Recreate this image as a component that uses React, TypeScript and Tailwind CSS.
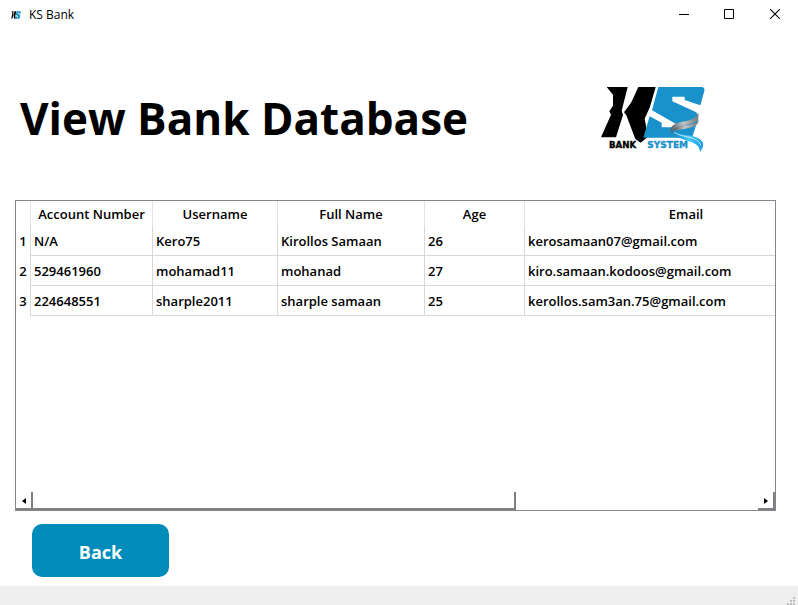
import React from "react";

type Account = {
  accountNumber: string;
  username: string;
  fullName: string;
  age: number;
  email: string;
};

const accounts: Account[] = [
  { accountNumber: "N/A", username: "Kero75", fullName: "Kirollos Samaan", age: 26, email: "kerosamaan07@gmail.com" },
  { accountNumber: "529461960", username: "mohamad11", fullName: "mohanad", age: 27, email: "kiro.samaan.kodoos@gmail.com" },
  { accountNumber: "224648551", username: "sharple2011", fullName: "sharple samaan", age: 25, email: "kerollos.sam3an.75@gmail.com" },
];

const headings = ["Account Number", "Username", "Full Name", "Age", "Email"];

function LetterMarks() {
  return (
    <>
      <path d="M50 36H113L95 107L99 120L78 187H33L63 119L58 109L69 92V59Z" fill="#000" />
      <path d="M145 36H197L180 95L164 131L174 185L152 203L136 192L109 121L102 112L124 82Z" fill="#000" />
      <path d="M205 36H334Q345 36 343 48L331 91L284 75V65H247V79L319 112L325 130L308 182Q304 188 294 188H160L179 124L215 143V157H250L257 146L186 106Z" fill="#1991ca" />
    </>
  );
}

function Logo() {
  return (
    <svg width="130" height="85" viewBox="0 0 390 255" role="img" aria-label="KS Bank System">
      <defs>
        <linearGradient id="silver" x1="0" x2="1">
          <stop offset="0" stopColor="#555b60" />
          <stop offset=".45" stopColor="#c5c5c5" />
          <stop offset="1" stopColor="#777" />
        </linearGradient>
        <linearGradient id="wave" x1="0" x2="1">
          <stop offset="0" stopColor="#087cba" />
          <stop offset=".55" stopColor="#48c8ff" />
          <stop offset="1" stopColor="#159de0" />
        </linearGradient>
      </defs>
      <LetterMarks />
      <path d="M247 153C270 132 316 147 324 112C334 148 294 147 266 155C250 160 245 169 249 178C240 169 240 160 247 153Z" fill="url(#silver)" />
      <path d="M251 163C273 144 319 157 326 132C329 160 289 159 251 168Z" fill="url(#silver)" />
      <path d="M245 164C267 187 319 173 337 200C344 212 335 224 330 231C331 197 279 201 254 181Z" fill="url(#wave)" />
      <path d="M252 172C281 190 323 182 333 211" fill="none" stroke="#fff" strokeWidth="2" />
      <text x="57" y="220" fill="#000" stroke="#000" fontFamily="'DejaVu Sans', sans-serif" fontWeight="700" fontSize="26">BANK</text>
      <text x="172" y="220" fill="#1991ca" stroke="#1991ca" fontFamily="'DejaVu Sans', sans-serif" fontWeight="700" fontSize="27">SYSTEM</text>
    </svg>
  );
}

function TitleBar() {
  return (
    <header className="flex h-[30px] items-center pl-[11px] text-black">
      <svg width="10" height="8" viewBox="30 30 320 165" preserveAspectRatio="none" aria-hidden="true">
        <LetterMarks />
      </svg>
      <span className="ml-2 text-xs">KS Bank</span>
      <div className="ml-auto flex h-full pb-0.5">
        <button aria-label="Minimize" className="flex w-[45px] items-center justify-center">
          <svg width="10" height="10" aria-hidden="true"><path d="M0 5.5H10" stroke="#000" /></svg>
        </button>
        <button aria-label="Maximize" className="flex w-[46px] items-center justify-center">
          <svg width="10" height="10" aria-hidden="true"><path d="M.5 .5H9.5V9.5H.5Z" fill="none" stroke="#000" /></svg>
        </button>
        <button aria-label="Close" className="flex w-[46px] items-center justify-center">
          <svg width="10" height="10" aria-hidden="true"><path d="M0 0L10 10M10 0L0 10" stroke="#000" strokeWidth="1.1" /></svg>
        </button>
      </div>
    </header>
  );
}

function AccountsTable() {
  return (
    <section aria-label="Bank accounts" className="mr-[22px] ml-[15px] flex flex-1 flex-col overflow-hidden border border-[#828790]">
      <div className="flex-1 overflow-hidden">
        <table className="w-[832px] table-fixed border-separate border-spacing-0 text-left text-[13px] leading-5 font-semibold">
          <colgroup>
            <col className="w-[15px]" />
            <col className="w-[122px]" />
            <col className="w-[125px]" />
            <col className="w-[147px]" />
            <col className="w-[100px]" />
            <col className="w-[323px]" />
          </colgroup>
          <thead>
            <tr className="h-[25px]">
              <td className="border-r border-[#e5e5e5] p-0" />
              {headings.map((heading) => (
                <th key={heading} scope="col" className="border-r border-[#e5e5e5] p-0 text-center font-semibold">{heading}</th>
              ))}
            </tr>
          </thead>
          <tbody>
            {accounts.map((account, index) => (
              <tr key={account.username} className="h-[30px]">
                <th scope="row" className="border-r border-[#d8d8d8] p-0 text-center font-semibold">{index + 1}</th>
                {[account.accountNumber, account.username, account.fullName, account.age, account.email].map((value, column) => (
                  <td key={column} className="border-r border-b border-[#d8d8d8] p-0 pl-[3px] whitespace-nowrap">{value}</td>
                ))}
              </tr>
            ))}
          </tbody>
        </table>
      </div>
      <div className="flex h-[18px]">
        <button aria-label="Scroll left" className="flex w-[17px] items-center justify-center border-r-2 border-b-2 border-[#808080] pt-0.5">
          <svg width="4" height="6" className="shrink-0" aria-hidden="true"><path d="M4 0V6L0 3Z" /></svg>
        </button>
        <div className="flex flex-1">
          <div className="w-2/3 border-r-2 border-b-2 border-[#808080]" />
        </div>
        <button aria-label="Scroll right" className="flex w-[17px] items-center justify-center border-r-2 border-b-2 border-[#808080] pt-0.5">
          <svg width="4" height="6" className="shrink-0" aria-hidden="true"><path d="M0 0V6L4 3Z" /></svg>
        </button>
      </div>
    </section>
  );
}

export default function App() {
  return (
    <div className="flex min-h-screen flex-col bg-white font-['Open_Sans','Noto_Sans',sans-serif] text-black">
      <TitleBar />
      <main className="flex flex-1 flex-col">
        <div className="flex h-[170px] items-center justify-between pt-1 pr-[78px] pl-5">
          <h1 className="pt-0.5 text-[44px] leading-[60px] font-bold whitespace-nowrap">View Bank Database</h1>
          <Logo />
        </div>
        <AccountsTable />
        <button className="mt-[13px] mb-[9px] ml-8 h-[53px] w-[137px] rounded-[10px] bg-[#008cba] pt-0.5 text-lg font-bold text-white">Back</button>
      </main>
      <footer className="flex h-[19px] items-end justify-end bg-[#efefef] pr-[3px]">
        <svg width="8" height="8" fill="#bfbfbf" aria-hidden="true">
          <path d="M6 0h2v2H6zM3 3h2v2H3zM6 3h2v2H6zM0 6h2v2H0zM3 6h2v2H3zM6 6h2v2H6z" />
        </svg>
      </footer>
    </div>
  );
}
